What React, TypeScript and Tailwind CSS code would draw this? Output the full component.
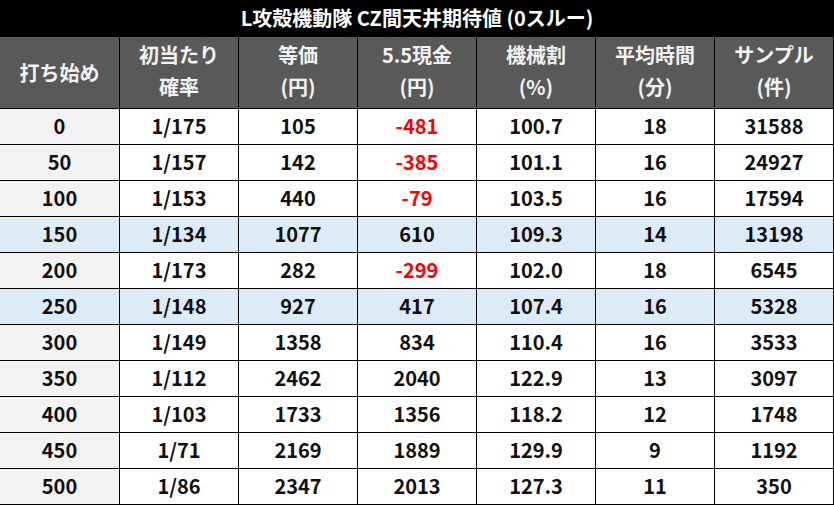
import React from "react";

type Row = {
  start: string;
  prob: string;
  eq: string;
  cash: string;
  rate: string;
  time: string;
  sample: string;
  blue?: boolean;
};

const rows: Row[] = [
  { start: "0", prob: "1/175", eq: "105", cash: "-481", rate: "100.7", time: "18", sample: "31588" },
  { start: "50", prob: "1/157", eq: "142", cash: "-385", rate: "101.1", time: "16", sample: "24927" },
  { start: "100", prob: "1/153", eq: "440", cash: "-79", rate: "103.5", time: "16", sample: "17594" },
  { start: "150", prob: "1/134", eq: "1077", cash: "610", rate: "109.3", time: "14", sample: "13198", blue: true },
  { start: "200", prob: "1/173", eq: "282", cash: "-299", rate: "102.0", time: "18", sample: "6545" },
  { start: "250", prob: "1/148", eq: "927", cash: "417", rate: "107.4", time: "16", sample: "5328", blue: true },
  { start: "300", prob: "1/149", eq: "1358", cash: "834", rate: "110.4", time: "16", sample: "3533" },
  { start: "350", prob: "1/112", eq: "2462", cash: "2040", rate: "122.9", time: "13", sample: "3097" },
  { start: "400", prob: "1/103", eq: "1733", cash: "1356", rate: "118.2", time: "12", sample: "1748" },
  { start: "450", prob: "1/71", eq: "2169", cash: "1889", rate: "129.9", time: "9", sample: "1192" },
  { start: "500", prob: "1/86", eq: "2347", cash: "2013", rate: "127.3", time: "11", sample: "350" },
];

const headers: [string, string][] = [
  ["初当たり", "確率"],
  ["等価", "(円)"],
  ["5.5現金", "(円)"],
  ["機械割", "(%)"],
  ["平均時間", "(分)"],
  ["サンプル", "(件)"],
];

export default function App() {
  return (
    <div
      className="w-[834px] h-[505px] bg-black overflow-hidden font-bold"
      style={{ fontFamily: '"Noto Sans CJK JP", "Noto Sans", sans-serif' }}
    >
      <div className="h-[37px] pb-px flex items-center justify-center text-white text-[20px] leading-none">
        L攻殻機動隊 CZ間天井期待値 (0スルー)
      </div>
      <div className="grid grid-cols-[119px_repeat(6,118px)] gap-px pr-px pb-px bg-black">
        <div className="h-[71px] bg-[#595959] text-[#f2f2f2] text-[20px] flex items-center justify-center">
          打ち始め
        </div>
        {headers.map(([a, b], i) => (
          <div
            key={i}
            className="h-[71px] pb-[3px] bg-[#595959] text-[#f2f2f2] text-[20px] leading-[32px] flex flex-col items-center justify-center"
          >
            <span>{a}</span>
            <span>{b}</span>
          </div>
        ))}
        {rows.map((r, i) => {
          const bg = r.blue ? "bg-[#ddebf7]" : "bg-white";
          const first = r.blue ? "bg-[#ddebf7]" : "bg-[#f2f2f2]";
          const cell = "h-[35px] pb-px flex items-center justify-center text-[20px] leading-none text-[#111]";
          const red = r.cash.startsWith("-");
          return (
            <React.Fragment key={i}>
              <div className={`${cell} ${first}`}>{r.start}</div>
              <div className={`${cell} ${bg}`}>{r.prob}</div>
              <div className={`${cell} ${bg}`}>{r.eq}</div>
              <div className={`${cell} ${bg} ${red ? "!text-[#ff0000]" : ""}`}>{r.cash}</div>
              <div className={`${cell} ${bg}`}>{r.rate}</div>
              <div className={`${cell} ${bg}`}>{r.time}</div>
              <div className={`${cell} ${bg}`}>{r.sample}</div>
            </React.Fragment>
          );
        })}
      </div>
    </div>
  );
}
